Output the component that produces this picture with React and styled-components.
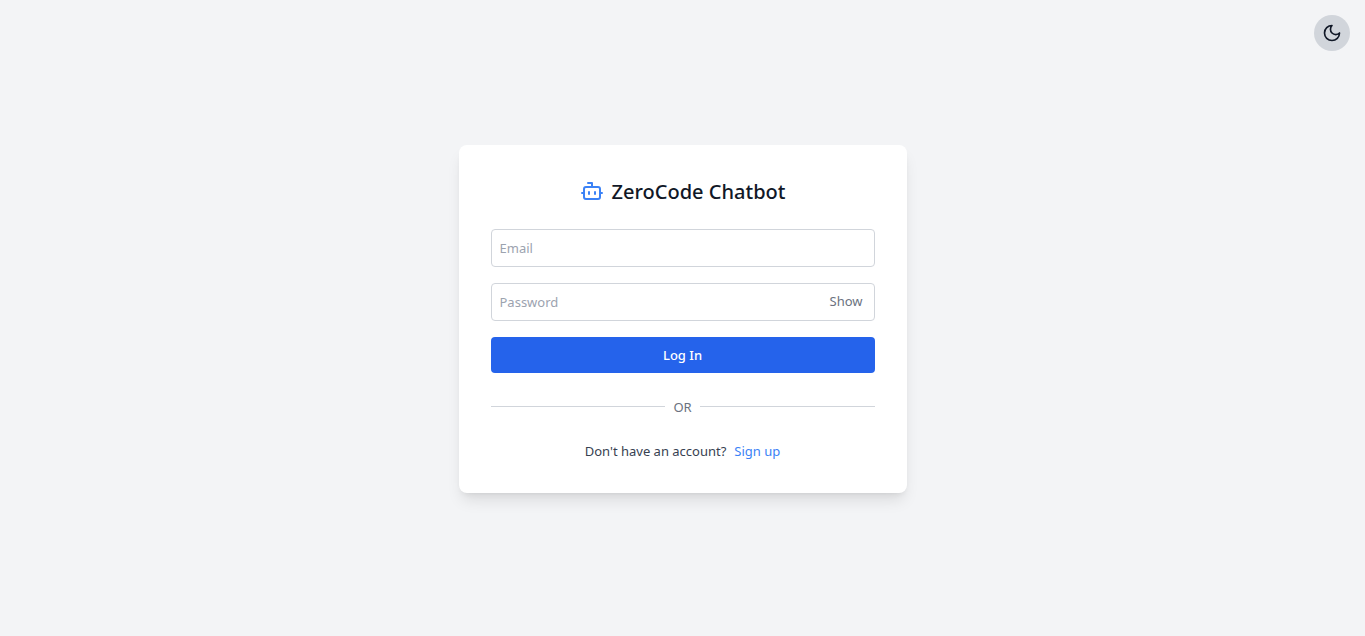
import React, { useState } from "react";
import styled, { createGlobalStyle } from "styled-components";
import { Bot } from "lucide-react";

const GlobalStyle = createGlobalStyle`
  *, *::before, *::after { box-sizing: border-box; }
  body {
    margin: 0;
    background: #f3f4f6;
    color: #111827;
    font-family: "Noto Sans", "Open Sans", sans-serif;
    font-size: 13px;
    line-height: 20px;
  }
  button, input { font: inherit; }
`;

const Page = styled.main`
  position: relative;
  min-height: 100vh;
  display: flex;
  align-items: center;
  justify-content: center;
  padding-top: 2px;
`;

const ThemeButton = styled.button`
  position: absolute;
  top: 15px;
  right: 15px;
  display: flex;
  padding: 8px;
  border: 0;
  border-radius: 50%;
  background: #d1d5db;
  color: #111827;
  cursor: pointer;
`;

const Card = styled.form`
  width: 100%;
  max-width: 448px;
  padding: 32px;
  border-radius: 8px;
  background: #fff;
  box-shadow: 0 10px 15px -3px rgba(0, 0, 0, 0.1), 0 4px 6px -4px rgba(0, 0, 0, 0.1);
`;

const Title = styled.h1`
  display: flex;
  align-items: flex-start;
  justify-content: center;
  gap: 8px;
  margin: 0 0 22px;
  font-size: 20px;
  font-weight: 500;
  line-height: 30px;
  svg {
    margin-top: 2px;
    color: #3b82f6;
  }
`;

const Field = styled.div`
  position: relative;
  margin-bottom: 16px;
`;

const Input = styled.input`
  display: block;
  width: 100%;
  height: 38px;
  padding: 8px;
  border: 1px solid #d1d5db;
  border-radius: 4px;
  background: #fff;
  color: #111827;
  &::placeholder { color: #9ca3af; opacity: 1; }
`;

const ShowButton = styled.button`
  position: absolute;
  top: 8px;
  right: 12px;
  padding: 0;
  border: 0;
  background: none;
  color: #6b7280;
  cursor: pointer;
`;

const SubmitButton = styled.button`
  display: block;
  width: 100%;
  padding: 8px;
  border: 0;
  border-radius: 4px;
  background: #2563eb;
  color: #fff;
  font-weight: 500;
  cursor: pointer;
`;

const Divider = styled.div`
  display: flex;
  align-items: center;
  gap: 8px;
  margin: 24px 0;
  color: #6b7280;
  &::before, &::after {
    content: "";
    flex: 1;
    height: 2px;
    border-top: 1px solid #d1d5db;
  }
`;

const Footer = styled.p`
  display: flex;
  justify-content: center;
  gap: 8px;
  margin: 0;
  color: #374151;
`;

const Link = styled.a`
  color: #3b82f6;
  text-decoration: none;
`;

function MoonIcon() {
  return (
    <svg width="20" height="20" viewBox="0 0 24 24" fill="none" stroke="currentColor"
      strokeWidth="2" strokeLinecap="round" strokeLinejoin="round" aria-hidden="true">
      <path d="M12 3a6 6 0 0 0 9 9 9 9 0 1 1-9-9Z" />
    </svg>
  );
}

export default function App() {
  const [visible, setVisible] = useState(false);
  return (
    <>
      <GlobalStyle />
      <Page>
        <ThemeButton type="button" aria-label="Toggle dark mode">
          <MoonIcon />
        </ThemeButton>
        <Card onSubmit={(e) => e.preventDefault()}>
          <Title><Bot size={24} />ZeroCode Chatbot</Title>
          <Field>
            <Input type="email" placeholder="Email" aria-label="Email" />
          </Field>
          <Field>
            <Input type={visible ? "text" : "password"} placeholder="Password" aria-label="Password" />
            <ShowButton type="button" onClick={() => setVisible(!visible)}>
              {visible ? "Hide" : "Show"}
            </ShowButton>
          </Field>
          <SubmitButton type="submit">Log In</SubmitButton>
          <Divider>OR</Divider>
          <Footer>
            <span>Don't have an account?</span>
            <Link href="#signup">Sign up</Link>
          </Footer>
        </Card>
      </Page>
    </>
  );
}
